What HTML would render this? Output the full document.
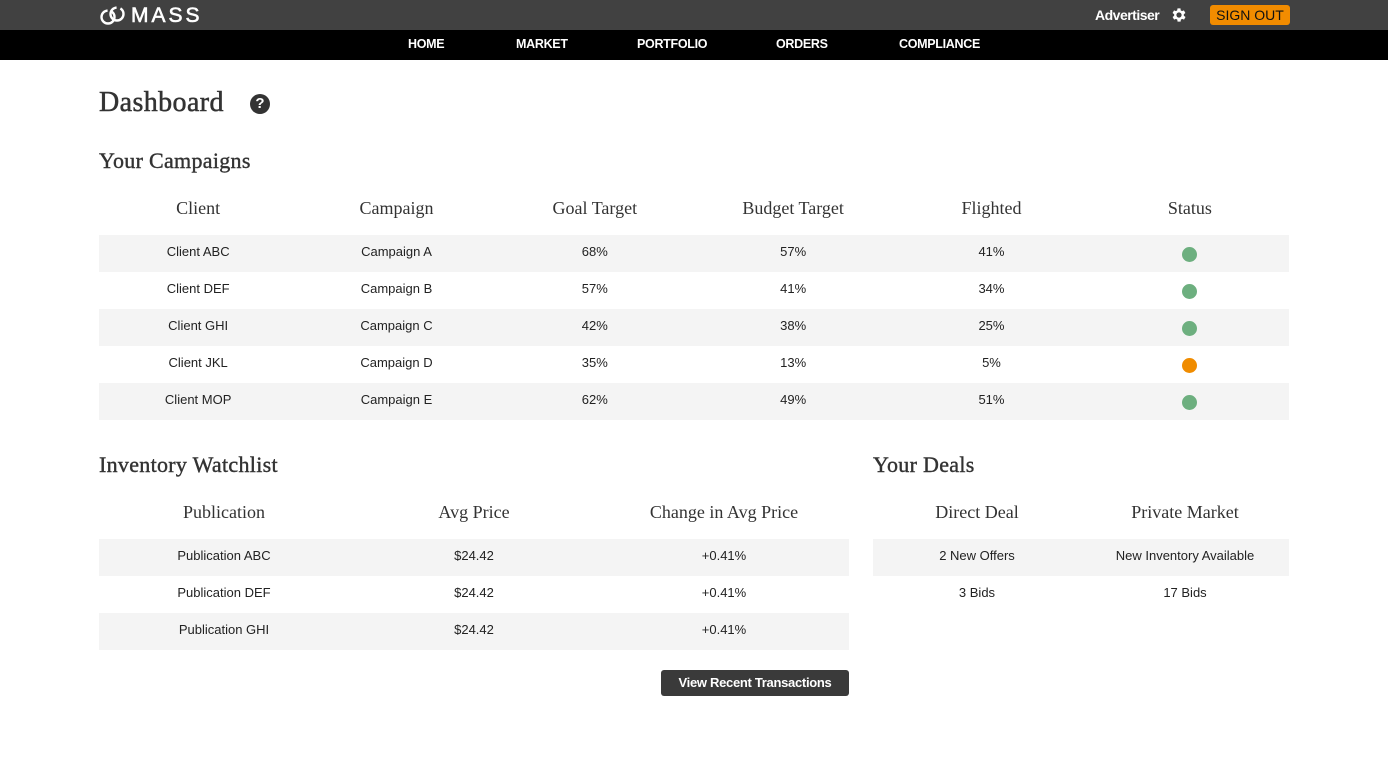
<!DOCTYPE html>
<html><head><meta charset="utf-8"><style>
*{margin:0;padding:0;box-sizing:border-box}
body{width:1388px;height:769px;background:#fff;font-family:"Liberation Sans",sans-serif;color:#222;position:relative;overflow:hidden}
.top{position:absolute;left:0;top:0;width:1388px;height:30px;background:#414141}
.nav{position:absolute;left:0;top:30px;width:1388px;height:30px;background:#000}
.nav span{position:absolute;top:7px;color:#fff;font-size:12.5px;font-weight:bold;letter-spacing:-0.3px}
.serif{font-family:"Liberation Serif",serif;color:#333}
.abs{position:absolute}
table{border-collapse:collapse;position:absolute;table-layout:fixed}
td,th{text-align:center;height:37px;font-size:13px;color:#222;padding-bottom:4px}
th{font-family:"Liberation Serif",serif;font-weight:normal;font-size:18px;color:#333;height:54px;vertical-align:top;padding:0}
tr.g td{background:#f4f4f4}
.dot{display:inline-block;width:15px;height:15px;border-radius:50%;background:#6daf7f;vertical-align:middle;position:relative;top:2px}
.o{background:#f08c00}
.h2{font-size:22px;-webkit-text-stroke:0.4px #333;letter-spacing:0.3px}
</style></head><body>
<div class="top"></div>
<svg class="abs" style="left:99px;top:6px" width="30" height="20" viewBox="0 0 30 20"><circle cx="9" cy="11" r="6.5" fill="none" stroke="#fff" stroke-width="2.4" stroke-dasharray="30 4"/><circle cx="18" cy="8" r="6.5" fill="none" stroke="#fff" stroke-width="2.4" stroke-dasharray="30 4"/></svg>
<div class="abs" style="left:131px;top:4px;color:#fff;font-size:21px;letter-spacing:3px;-webkit-text-stroke:0.6px #fff">MASS</div>
<div class="abs" style="left:1095px;top:7px;color:#fff;font-size:14px;font-weight:bold;letter-spacing:-0.5px">Advertiser</div>
<svg class="abs" style="left:1170px;top:6px" width="18" height="18" viewBox="0 0 24 24"><path fill="#fff" d="M19.4 13a7.5 7.5 0 000-2l2.1-1.6-2-3.5-2.5 1a7.6 7.6 0 00-1.7-1L15 3.2h-4l-.4 2.7a7.6 7.6 0 00-1.7 1l-2.5-1-2 3.5L6.6 11a7.5 7.5 0 000 2l-2.1 1.6 2 3.5 2.5-1a7.6 7.6 0 001.7 1l.4 2.7h4l.4-2.7a7.6 7.6 0 001.7-1l2.5 1 2-3.5zM13 15.5a3.5 3.5 0 110-7 3.5 3.5 0 010 7z" transform="translate(-1 0)"/></svg>
<div class="abs" style="left:1210px;top:5px;width:80px;height:20px;background:#f28c00;border-radius:3px;font-size:14px;color:#111;text-align:center;line-height:20px">SIGN OUT</div>
<div class="nav"><span style="left:408px">HOME</span><span style="left:516px">MARKET</span><span style="left:637px">PORTFOLIO</span><span style="left:776px">ORDERS</span><span style="left:899px">COMPLIANCE</span></div>
<div class="abs serif" style="left:99px;top:87px;font-size:28px;-webkit-text-stroke:0.5px #333;letter-spacing:0.4px">Dashboard</div>
<div class="abs" style="left:250px;top:94px;width:20px;height:20px;border-radius:50%;background:#333;color:#fff;font-weight:bold;font-size:15px;text-align:center;line-height:20px">?</div>
<div class="abs serif h2" style="left:99px;top:148px">Your Campaigns</div>
<table style="left:99px;top:198px;width:1190px">
<tr><th>Client</th><th>Campaign</th><th>Goal Target</th><th>Budget Target</th><th>Flighted</th><th>Status</th></tr>
</table>
<table style="left:99px;top:235px;width:1190px">
<tr class="g"><td>Client ABC</td><td>Campaign A</td><td>68%</td><td>57%</td><td>41%</td><td><span class="dot"></span></td></tr>
<tr><td>Client DEF</td><td>Campaign B</td><td>57%</td><td>41%</td><td>34%</td><td><span class="dot"></span></td></tr>
<tr class="g"><td>Client GHI</td><td>Campaign C</td><td>42%</td><td>38%</td><td>25%</td><td><span class="dot"></span></td></tr>
<tr><td>Client JKL</td><td>Campaign D</td><td>35%</td><td>13%</td><td>5%</td><td><span class="dot o"></span></td></tr>
<tr class="g"><td>Client MOP</td><td>Campaign E</td><td>62%</td><td>49%</td><td>51%</td><td><span class="dot"></span></td></tr>
</table>
<div class="abs serif h2" style="left:99px;top:452px">Inventory Watchlist</div>
<div class="abs serif h2" style="left:873px;top:452px">Your Deals</div>
<table style="left:99px;top:502px;width:750px"><tr><th>Publication</th><th>Avg Price</th><th>Change in Avg Price</th></tr></table>
<table style="left:99px;top:539px;width:750px">
<tr class="g"><td>Publication ABC</td><td>$24.42</td><td>+0.41%</td></tr>
<tr><td>Publication DEF</td><td>$24.42</td><td>+0.41%</td></tr>
<tr class="g"><td>Publication GHI</td><td>$24.42</td><td>+0.41%</td></tr>
</table>
<table style="left:873px;top:502px;width:416px"><tr><th>Direct Deal</th><th>Private Market</th></tr></table>
<table style="left:873px;top:539px;width:416px">
<tr class="g"><td>2 New Offers</td><td>New Inventory Available</td></tr>
<tr><td>3 Bids</td><td>17 Bids</td></tr>
</table>
<div class="abs" style="left:661px;top:670px;width:188px;height:26px;background:#3a3a3a;border-radius:3px;color:#fff;font-size:13px;font-weight:bold;text-align:center;line-height:26px;letter-spacing:-0.3px">View Recent Transactions</div>
</body></html>
